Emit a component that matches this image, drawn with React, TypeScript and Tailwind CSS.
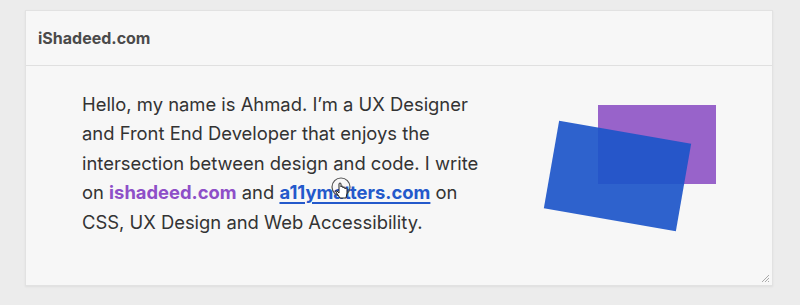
export default function App() {
  return (
    <div className="h-[305px] w-[800px] bg-[#ececec] pl-[25px] pt-[10px]">
      <div className="relative flex h-[276px] w-[748px] flex-col border border-[#e2e2e2] bg-[#f7f7f7] shadow-[0_1px_2px_rgba(0,0,0,0.06)]">
        <div className="flex h-[55px] items-center border-b border-[#e0e0e0] pl-[12px] font-['Inter',sans-serif] text-[16px] font-bold text-[#4a4a4a]">
          iShadeed.com
        </div>
        <div className="flex flex-1 pl-[56px] pt-[24px]">
          <p className="w-[420px] font-['Inter',sans-serif] text-[18.4px] leading-[29.4px] text-[#333]">
            Hello, my name is Ahmad. I’m a UX Designer and Front End Developer that enjoys the
            intersection between design and code. I write on{" "}
            <a className="font-bold text-[#8e4fc8]">ishadeed.com</a> and{" "}
            <a className="relative font-bold text-[#2459cb] underline decoration-[1.5px] underline-offset-[3px]">
              a11ymatters.com
              <svg
                className="absolute left-[50px] top-[-4px]"
                width="26"
                height="28"
                viewBox="0 0 26 28"
              >
                <circle cx="12" cy="10" r="9" fill="none" stroke="#555" strokeWidth="1.2" />
                <path
                  d="M10 7 v9 l-2 -2 q-2 -1 -1 1 l4 6 h6 l1 -5 v-4 q0 -1 -1 -1 q-1 0 -1 1 v-1 q0 -1 -1 -1 q-1 0 -1 1 v-1 q0 -1 -1 -1 q-1 0 -1 1 v-3 q0 -1 -1 -1 q-1 0 -1 1 z"
                  fill="#fff"
                  stroke="#222"
                  strokeWidth="1"
                  strokeLinejoin="round"
                />
              </svg>
            </a>{" "}
            on CSS, UX Design and Web Accessibility.
          </p>
          <div className="relative ml-[14px] h-[160px] w-[200px]">
            <svg className="absolute left-0 top-0" width="200" height="160" viewBox="0 0 200 160">
              <rect x="82" y="15" width="119" height="79" fill="#8f56c5" opacity="0.92" />
              <g transform="rotate(9.9 101.5 86)">
                <rect x="34.5" y="41.5" width="134" height="89" fill="#1c55c9" opacity="0.92" />
              </g>
            </svg>
          </div>
        </div>
        <svg className="absolute bottom-[2px] right-[2px]" width="10" height="10" viewBox="0 0 10 10">
          <path d="M9 2 L2 9 M9 5 L5 9 M9 8 L8 9" stroke="#aaa" strokeWidth="1" />
        </svg>
      </div>
    </div>
  );
}
